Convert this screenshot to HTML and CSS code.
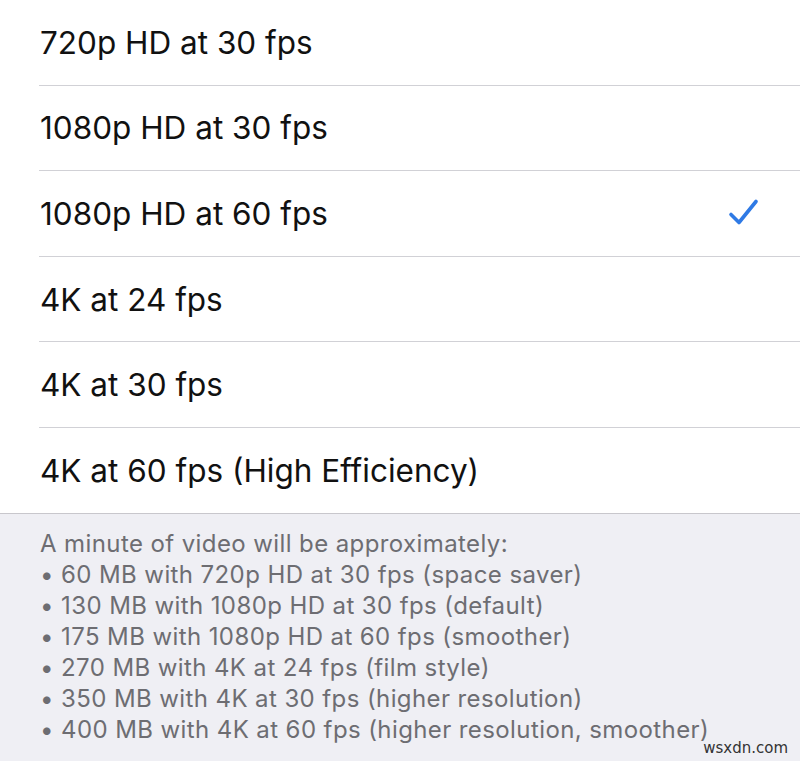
FILE: index.html
```html
<!DOCTYPE html>
<html>
<head>
<meta charset="utf-8">
<link rel="stylesheet" href="styles.css">
</head>
<body>
<div class="page">
  <ul class="group">
    <li class="row"><span class="label">720p HD at 30 fps</span></li>
    <li class="row"><span class="label">1080p HD at 30 fps</span></li>
    <li class="row"><span class="label">1080p HD at 60 fps</span>
      <svg class="check" width="32" height="30" viewBox="0 0 32 30"><path d="M3 16.5 L11 24.5 L28 3.5" fill="none" stroke="#2f7ae5" stroke-width="3.6" stroke-linecap="round" stroke-linejoin="round"/></svg>
    </li>
    <li class="row"><span class="label">4K at 24 fps</span></li>
    <li class="row"><span class="label">4K at 30 fps</span></li>
    <li class="row last"><span class="label">4K at 60 fps (High Efficiency)</span></li>
  </ul>
  <div class="footer">
    <p>A minute of video will be approximately:</p>
    <p>• 60 MB with 720p HD at 30 fps (space saver)</p>
    <p>• 130 MB with 1080p HD at 30 fps (default)</p>
    <p>• 175 MB with 1080p HD at 60 fps (smoother)</p>
    <p>• 270 MB with 4K at 24 fps (film style)</p>
    <p>• 350 MB with 4K at 30 fps (higher resolution)</p>
    <p>• 400 MB with 4K at 60 fps (higher resolution, smoother)</p>
  </div>
  <div class="watermark">wsxdn.com</div>
</div>
</body>
</html>
```

FILE: styles.css
```css
html, body {
  margin: 0;
  padding: 0;
}
body {
  width: 800px;
  height: 761px;
  overflow: hidden;
  background: #efeff4;
  font-family: Inter, "Liberation Sans", sans-serif;
}
.page {
  position: relative;
  width: 800px;
  height: 761px;
}
.group {
  list-style: none;
  margin: 0;
  padding: 0 0 0 39px;
  background: #ffffff;
  border-bottom: 1px solid #c8c7cc;
}
.row {
  display: flex;
  align-items: center;
  justify-content: space-between;
  height: 84.6px;
  border-bottom: 1px solid #d1d1d6;
  padding-right: 40px;
}
.row.last {
  border-bottom: none;
}
.label {
  font-size: 31.5px;
  color: #111111;
  padding-left: 1px;
}
.check {
  display: block;
}
.footer {
  padding: 14px 20px 0 40px;
  color: #6d6d72;
  font-size: 24px;
  letter-spacing: 0.4px;
  line-height: 31px;
}
.footer p {
  margin: 0;
  white-space: nowrap;
}
.watermark {
  position: absolute;
  right: 12px;
  bottom: 4px;
  font-family: "DejaVu Sans", sans-serif;
  font-size: 15px;
  color: #333;
}
```
